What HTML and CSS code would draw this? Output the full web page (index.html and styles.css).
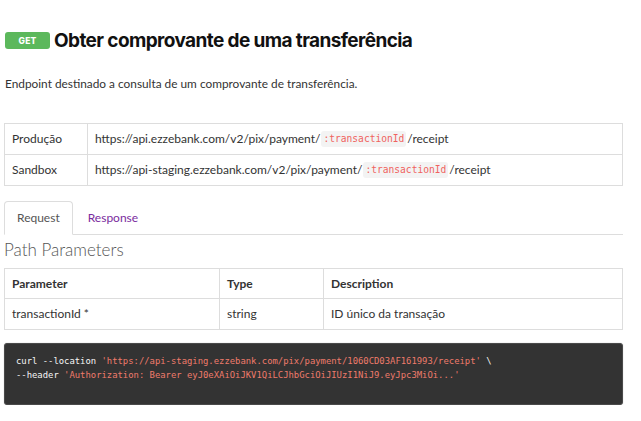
FILE: index.html
```html
<!DOCTYPE html>
<html lang="pt-BR">
<head>
<meta charset="utf-8">
<title>Obter comprovante de uma transferência</title>
<link rel="stylesheet" href="styles.css">
</head>
<body>
<div class="page">
  <div class="header">
    <span class="badge">GET</span>
    <h1 class="title">Obter comprovante de uma transferência</h1>
  </div>
  <p class="desc">Endpoint destinado a consulta de um comprovante de transferência.</p>

  <table class="tbl endpoints">
    <tr>
      <td class="env">Produção</td>
      <td>https://api.ezzebank.com/v2/pix/payment/<code class="ic">:transactionId</code>/receipt</td>
    </tr>
    <tr>
      <td class="env">Sandbox</td>
      <td>https://api-staging.ezzebank.com/v2/pix/payment/<code class="ic">:transactionId</code>/receipt</td>
    </tr>
  </table>

  <div class="tabs">
    <span class="tab active">Request</span>
    <span class="tab link">Response</span>
  </div>

  <h2 class="section">Path Parameters</h2>

  <table class="tbl params">
    <tr>
      <th class="c1">Parameter</th>
      <th class="c2">Type</th>
      <th class="c3">Description</th>
    </tr>
    <tr>
      <td>transactionId *</td>
      <td>string</td>
      <td>ID único da transação</td>
    </tr>
  </table>

  <pre class="code"><span class="kw">curl --location </span><span class="str">'https://api-staging.ezzebank.com/pix/payment/1060CD03AF161993/receipt'</span><span class="kw"> \</span>
<span class="kw">--header </span><span class="str">'Authorization: Bearer eyJ0eXAiOiJKV1QiLCJhbGciOiJIUzI1NiJ9.eyJpc3MiOi...'</span></pre>
</div>
</body>
</html>
```

FILE: styles.css
```css
html, body {
  margin: 0;
  padding: 0;
  background: #fff;
}
body {
  font-family: "Lato", "Open Sans", sans-serif;
  color: #333;
  font-size: 12px;
}
.page {
  width: 619px;
  padding: 0 18px 0 4px;
}
.header {
  display: flex;
  align-items: center;
  gap: 4px;
  padding-top: 28px;
  height: 25px;
}
.badge {
  display: inline-flex;
  align-items: center;
  justify-content: center;
  width: 45px;
  height: 17px;
  margin-left: 1px;
  background: #5cb85c;
  color: #fff;
  border-radius: 3px;
  font-family: "Inter", "DejaVu Sans", sans-serif;
  font-weight: 800;
  font-size: 8.5px;
  letter-spacing: 0.2px;
}
.title {
  margin: 0;
  font-family: "Inter", "DejaVu Sans", sans-serif;
  font-weight: 700;
  font-size: 19px;
  line-height: 25px;
  color: #111;
  letter-spacing: -0.6px;
}
.desc {
  margin: 23px 0 0 1px;
  line-height: 16px;
  font-size: 11.85px;
  color: #333;
}
.tbl {
  width: 619px;
  border-collapse: collapse;
  font-size: 12px;
}
.tbl td, .tbl th {
  border: 1px solid #ddd;
  padding: 7px;
  height: 16px;
  line-height: 16px;
  text-align: left;
  vertical-align: middle;
}
.endpoints {
  margin-top: 31px;
}
.endpoints .env {
  width: 68px;
}
.ic {
  display: inline-block;
  font-family: "DejaVu Sans Mono", "Liberation Mono", monospace;
  font-size: 9.6px;
  line-height: 16px;
  height: 16px;
  vertical-align: top;
  color: #f0625e;
  background: #f3f3f3;
  border-radius: 3px;
  padding: 0 2px;
  margin: 0 1px;
}
.tabs {
  margin-top: 15px;
  display: flex;
  border-bottom: 1px solid #ddd;
  height: 33px;
}
.tab {
  padding: 8px 12px;
  line-height: 16px;
  margin-right: 2px;
  border: 1px solid transparent;
  border-radius: 4px 4px 0 0;
  height: 16px;
}
.tab.active {
  border-color: #ddd;
  border-bottom-color: #fff;
  color: #555;
  background: #fff;
}
.tab.link {
  color: #7a2b9e;
}
.section {
  margin: 5px 0 0 0;
  font-weight: 300;
  font-size: 17px;
  line-height: 20px;
  color: #555;
}
.params {
  margin-top: 8px;
}
.params th {
  font-weight: 700;
  padding: 7px 7px 6px;
}
.params .c1 { width: 200px; }
.params .c2 { width: 89px; }
.code {
  margin: 13px 0 0 0;
  background: #333;
  border: 1px solid #4a4a4a;
  border-radius: 3px;
  padding: 10px 11px 22px;
  font-family: "DejaVu Sans Mono", "Liberation Mono", monospace;
  font-size: 8.9px;
  line-height: 14px;
  white-space: pre;
  box-shadow: 0 0 1px rgba(0,0,0,0.4);
}
.code .kw { color: #f5f5f5; }
.code .str { color: #ef7b6b; }
```
